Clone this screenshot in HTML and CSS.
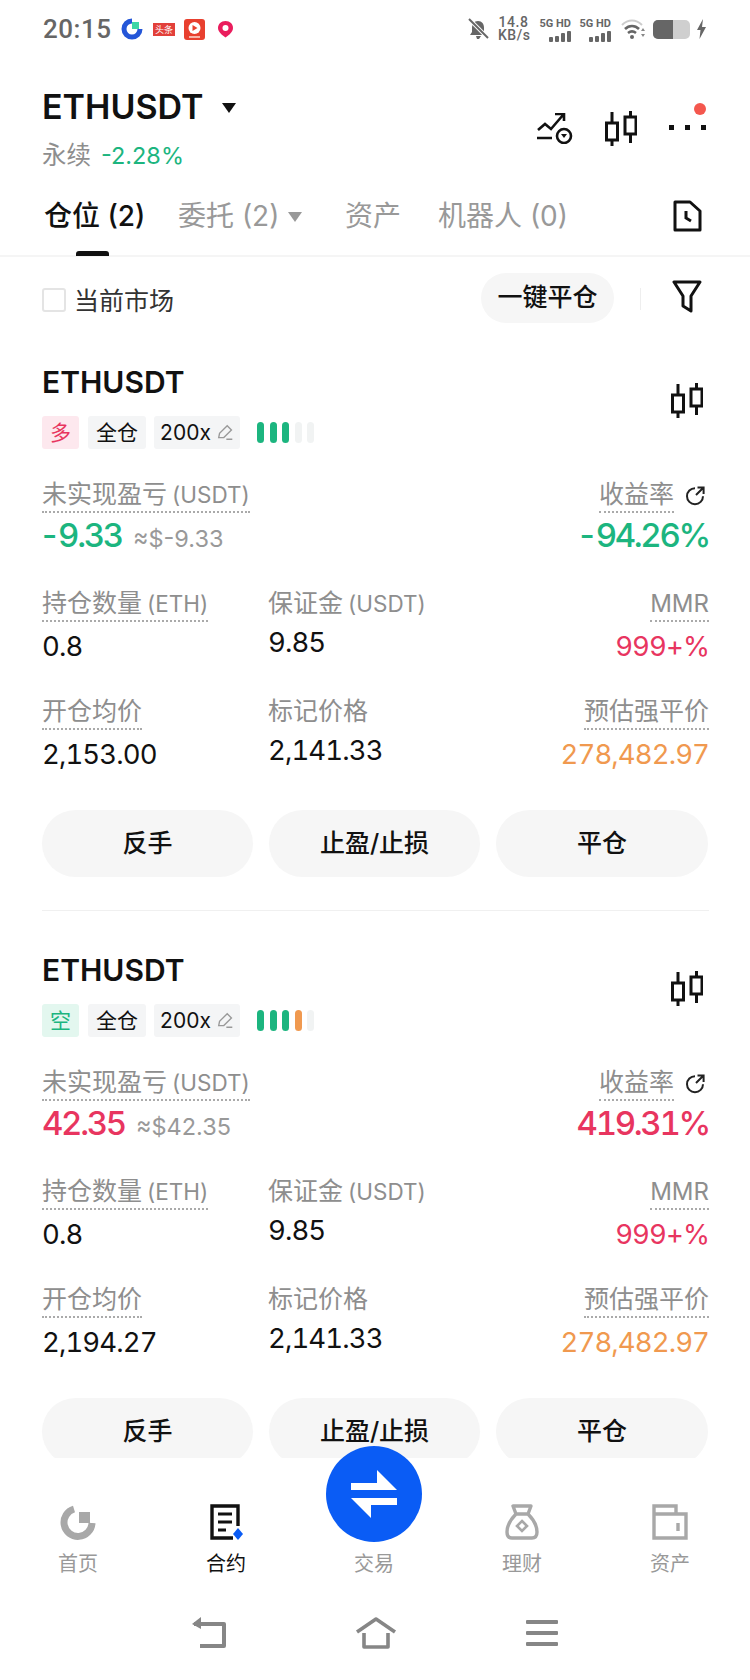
FILE: index.html
```html
<!DOCTYPE html>
<html lang="en">
<head>
    <meta charset="UTF-8">
    <title>ETHUSDT</title>
    <link rel="stylesheet" href="styles.css">
</head>
<body>
    <svg class="defs" width="0" height="0">
        <symbol id="candle" viewBox="0 0 32 35">
            <path d="M7 1v11M7 29v6M25.500 0v6M25.500 23v9" fill="none" stroke="#111" stroke-width="3"/>
            <rect x="1.500" y="12" width="11" height="17" fill="none" stroke="#111" stroke-width="3"/>
            <rect x="20" y="6" width="11" height="17" fill="none" stroke="#111" stroke-width="3"/>
        </symbol>
        <symbol id="pen" viewBox="0 0 20 20">
            <path d="M2 16 3 11 12 2l5 5-9 9zM11 18h7" fill="none" stroke="#999" stroke-width="1.6"/>
        </symbol>
        <symbol id="refresh" viewBox="0 0 20 20">
            <path d="M10 2.200a8 8 0 1 0 8 8" fill="none" stroke="#222" stroke-width="2"/>
            <path d="M11 9l7-7M12.500 1.600H18.600V8" fill="none" stroke="#222" stroke-width="2"/>
        </symbol>
    </svg>

    <div class="phone">
        <div class="status">
            <span class="time">20:15</span>
            <svg class="app-ring" width="22" height="22" viewBox="0 0 22 22">
                <path d="M11 3a8 8 0 1 0 8 8" fill="none" stroke="#2456d8" stroke-width="5"/>
                <rect x="11" y="4" width="7" height="7" fill="#3ed6a6"/>
            </svg>
            <span class="app-news">头条</span>
            <svg class="app-video" width="21" height="21" viewBox="0 0 21 21">
                <rect width="21" height="21" rx="3" fill="#e8402f"/>
                <circle cx="10.500" cy="9" r="6" fill="#fff"/>
                <path d="M8.500 6l5 3-5 3z" fill="#e8402f"/>
                <rect x="5" y="17" width="11" height="2" fill="#f7b3a8"/>
            </svg>
            <svg class="app-pin" width="17" height="18" viewBox="0 0 17 18">
                <path d="M8.500 1C4 1 1 4 1 8c0 4 4 7 7.500 9.500C12 15 16 12 16 8c0-4-3-7-7.500-7z" fill="#ea1d5d"/>
                <circle cx="8.500" cy="8" r="3" fill="#fff"/>
            </svg>
            <div class="status-right">
                <svg width="21" height="22" viewBox="0 0 21 22">
                    <path d="M10 3c4 0 6 3 6 7v4l3 3H2l2-3v-4c0-4 2-7 6-7zM8 18h5l-2 3h-2z" fill="#666"/>
                    <path d="M1 1l19 19" stroke="#fff" stroke-width="4"/>
                    <path d="M1 1l19 19" stroke="#666" stroke-width="2"/>
                </svg>
                <div class="speed"><span>14.8</span><span>KB/s</span></div>
                <div class="signal">
                    <span>5G HD</span>
                    <div class="sig-bars"><i class="s1"></i><i class="s2"></i><i class="s3"></i><i class="s4"></i></div>
                </div>
                <div class="signal">
                    <span>5G HD</span>
                    <div class="sig-bars"><i class="s1"></i><i class="s2"></i><i class="s3"></i><i class="s4"></i></div>
                </div>
                <svg class="wifi" width="25" height="20" viewBox="0 0 25 20">
                    <path d="M1 6c6-6 14-6 20 0" fill="none" stroke="#ccc" stroke-width="2"/>
                    <path d="M4 10c4-4 10-4 14 0M7 14c2.500-2 5.500-2 8 0" fill="none" stroke="#666" stroke-width="2.600"/>
                    <circle cx="11" cy="18" r="2" fill="#666"/>
                    <path d="M22 9l2 3h-4zM22 18l2-3h-4z" fill="#888"/>
                </svg>
                <div class="battery"><div class="battery-fill"></div></div>
                <svg width="9" height="20" viewBox="0 0 9 20"><path d="M6 0 0 11h3.500L2.500 20 9 8H5z" fill="#666"/></svg>
            </div>
        </div>

        <div class="header">
            <div>
                <div class="symbol"><span>ETHUSDT</span><i class="caret"></i></div>
                <div class="symbol-sub">永续 <span class="green">-2.28%</span></div>
            </div>
            <div class="header-icons">
                <svg class="chart-ic" width="36" height="31" viewBox="0 0 36 31">
                    <path d="M1 17l7-6 6 5L26 2M18 1h9v7M0 25h15" fill="none" stroke="#111" stroke-width="2.600"/>
                    <circle cx="27" cy="23" r="7" fill="none" stroke="#111" stroke-width="2.600"/>
                    <path d="M24 21h6l-3 4z" fill="#111"/>
                </svg>
                <svg class="candle-top" width="32" height="35"><use href="#candle"/></svg>
                <div class="more">
                    <i></i><i></i><i></i>
                    <b class="more-dot"></b>
                </div>
            </div>
        </div>

        <div class="tabs">
            <div class="tab active">仓位 (2)</div>
            <div class="tab tab-order">委托 (2)<i class="caret-grey"></i></div>
            <div class="tab tab-asset">资产</div>
            <div class="tab tab-bot">机器人 (0)</div>
            <svg class="tab-doc" width="29" height="32" viewBox="0 0 29 32">
                <path d="M2 2h15l10 9v19H2z" fill="none" stroke="#111" stroke-width="3" stroke-linejoin="round"/>
                <path d="M13 11v7l5 3" fill="none" stroke="#111" stroke-width="3"/>
            </svg>
        </div>

        <div class="main">
            <div class="filter">
                <span class="check"></span>
                <span class="filter-text">当前市场</span>
                <span class="close-all">一键平仓</span>
                <span class="filter-sep"></span>
                <svg width="30" height="33" viewBox="0 0 30 33">
                    <path d="M2 2h26L19 16v15l-8-5V16z" fill="none" stroke="#111" stroke-width="3" stroke-linejoin="round"/>
                </svg>
            </div>

            <div class="card">
                <div class="card-head">
                    <span class="card-title">ETHUSDT</span>
                    <svg width="32" height="35"><use href="#candle"/></svg>
                </div>
                <div class="tags">
                    <span class="tag tag-long">多</span>
                    <span class="tag tag-mode">全仓</span>
                    <span class="tag tag-lev">200x<svg width="17" height="17"><use href="#pen"/></svg></span>
                    <div class="risk">
                        <i class="on"></i><i class="on"></i><i class="on"></i><i></i><i></i>
                    </div>
                </div>
                <div class="pnl">
                    <div>
                        <span class="label dotted">未实现盈亏 <span class="unit">(USDT)</span></span>
                        <div class="pnl-val"><span class="big green neg">-9.33</span><span class="approx">≈$-9.33</span></div>
                    </div>
                    <div class="right">
                        <span class="label-wrap"><span class="label dotted">收益率</span><svg width="20" height="20"><use href="#refresh"/></svg></span>
                        <div class="big green">-94.26%</div>
                    </div>
                </div>
                <div class="metrics">
                    <div class="metric"><span class="label dotted">持仓数量 <span class="unit">(ETH)</span></span><div class="val">0.8</div></div>
                    <div class="metric mid"><span class="label">保证金 <span class="unit">(USDT)</span></span><div class="val">9.85</div></div>
                    <div class="metric right"><span class="label label-en dotted">MMR</span><div class="val red">999+%</div></div>
                    <div class="metric"><span class="label dotted">开仓均价</span><div class="val">2,153.00</div></div>
                    <div class="metric mid"><span class="label">标记价格</span><div class="val">2,141.33</div></div>
                    <div class="metric right"><span class="label dotted">预估强平价</span><div class="val orange">278,482.97</div></div>
                </div>
                <div class="actions">
                    <span class="btn">反手</span>
                    <span class="btn">止盈/止损</span>
                    <span class="btn">平仓</span>
                </div>
            </div>

            <div class="card">
                <div class="card-head">
                    <span class="card-title">ETHUSDT</span>
                    <svg width="32" height="35"><use href="#candle"/></svg>
                </div>
                <div class="tags">
                    <span class="tag tag-short">空</span>
                    <span class="tag tag-mode">全仓</span>
                    <span class="tag tag-lev">200x<svg width="17" height="17"><use href="#pen"/></svg></span>
                    <div class="risk">
                        <i class="on"></i><i class="on"></i><i class="on"></i><i class="warn"></i><i></i>
                    </div>
                </div>
                <div class="pnl">
                    <div>
                        <span class="label dotted">未实现盈亏 <span class="unit">(USDT)</span></span>
                        <div class="pnl-val"><span class="big red">42.35</span><span class="approx">≈$42.35</span></div>
                    </div>
                    <div class="right">
                        <span class="label-wrap"><span class="label dotted">收益率</span><svg width="20" height="20"><use href="#refresh"/></svg></span>
                        <div class="big red">419.31%</div>
                    </div>
                </div>
                <div class="metrics">
                    <div class="metric"><span class="label dotted">持仓数量 <span class="unit">(ETH)</span></span><div class="val">0.8</div></div>
                    <div class="metric mid"><span class="label">保证金 <span class="unit">(USDT)</span></span><div class="val">9.85</div></div>
                    <div class="metric right"><span class="label label-en dotted">MMR</span><div class="val red">999+%</div></div>
                    <div class="metric"><span class="label dotted">开仓均价</span><div class="val">2,194.27</div></div>
                    <div class="metric mid"><span class="label">标记价格</span><div class="val">2,141.33</div></div>
                    <div class="metric right"><span class="label dotted">预估强平价</span><div class="val orange">278,482.97</div></div>
                </div>
                <div class="actions">
                    <span class="btn">反手</span>
                    <span class="btn">止盈/止损</span>
                    <span class="btn">平仓</span>
                </div>
            </div>
        </div>

        <div class="bottom">
            <div class="nav">
                <div class="nav-item">
                    <svg width="36" height="36" viewBox="0 0 36 36">
                        <path d="M14 5a14 14 0 1 0 18 14" fill="none" stroke="#a8a8a8" stroke-width="7"/>
                        <rect x="19" y="8" width="11" height="11" fill="#a8a8a8"/>
                    </svg>
                    <span>首页</span>
                </div>
                <div class="nav-item nav-on">
                    <svg width="36" height="36" viewBox="0 0 36 36">
                        <path d="M30 22V2H4v32h21" fill="none" stroke="#111" stroke-width="3.400"/>
                        <path d="M10 10h14M10 18h14M10 26h8" stroke="#111" stroke-width="3"/>
                        <path d="M30 24l5 6-5 6-5-6z" fill="#0a5cf5"/>
                    </svg>
                    <span>合约</span>
                </div>
                <div class="nav-item">
                    <span class="nav-gap"></span>
                    <span>交易</span>
                </div>
                <div class="nav-item">
                    <svg width="36" height="36" viewBox="0 0 36 36">
                        <path d="M9 2h18l-3 8H12zM12 10C6 16 3 22 3 28c0 4 2 6 5 6h20c3 0 5-2 5-6 0-6-3-12-9-18" fill="none" stroke="#a8a8a8" stroke-width="3.400" stroke-linejoin="round"/>
                        <path d="M18 17l5 5-5 5-5-5z" fill="none" stroke="#a8a8a8" stroke-width="2.600"/>
                    </svg>
                    <span>理财</span>
                </div>
                <div class="nav-item">
                    <svg width="36" height="36" viewBox="0 0 36 36">
                        <path d="M2 10V2h22v8M2 10h32v24H2zM26 19v8" fill="none" stroke="#a8a8a8" stroke-width="3.400"/>
                    </svg>
                    <span>资产</span>
                </div>
            </div>
            <div class="sysnav">
                <svg width="36" height="32" viewBox="0 0 36 32">
                    <path d="M3 7h30v22H9" fill="none" stroke="#868686" stroke-width="4" stroke-linejoin="round"/>
                    <path d="M10 0v12L1 7z" fill="#868686"/>
                </svg>
                <svg width="42" height="32" viewBox="0 0 42 32">
                    <path d="M2 15 21 2l19 13M9 16v14h24V16" fill="none" stroke="#868686" stroke-width="3.600" stroke-linejoin="round"/>
                </svg>
                <div class="sys-menu"><i></i><i></i><i></i></div>
            </div>
        </div>

        <!-- sits over the bottom of the list and the nav -->
        <div class="fab">
            <svg width="46" height="48" viewBox="0 0 46 48">
                <path d="M26 0l20 20H0v-7h26zM20 48L0 28h46v7H20z" fill="#fff"/>
            </svg>
        </div>
    </div>
</body>
</html>
```

FILE: styles.css
```css
*{
    margin: 0;
    padding: 0;
    box-sizing: border-box;
}
body{
    background: #fff;
    font-family: Inter, "Noto Sans CJK SC", sans-serif;
    color: #111;
}
i{
    display: block;
}
.defs{
    position: absolute;
}
.phone{
    position: relative;
    width: 750px;
    height: 1680px;
    overflow: hidden;
    display: flex;
    flex-direction: column;
}
.green{
    color: #1cb57f;
}
.red{
    color: #e8355f;
}
.orange{
    color: #f0994f;
}

/* status bar */
.status{
    height: 58px;
    padding: 0 44px 0 43px;
    display: flex;
    align-items: center;
    color: #666;
}
.time{
    font: 500 26px Roboto, sans-serif;
    letter-spacing: 0.5px;
    width: 78px;
}
.app-ring{
    margin-right: 10px;
}
.app-news{
    width: 22px;
    height: 13px;
    background: #e2403a;
    color: #fff;
    font-size: 9px;
    line-height: 13px;
    text-align: center;
    margin-right: 9px;
}
.app-video{
    margin-right: 12px;
}
.status-right{
    margin-left: auto;
    display: flex;
    align-items: center;
}
.speed{
    display: flex;
    flex-direction: column;
    font: 500 14px/13px Roboto, sans-serif;
    letter-spacing: 0.5px;
    margin: 0 9px 0 9px;
    width: 31px;
    text-align: center;
}
.signal{
    width: 33px;
    margin-right: 7px;
    display: flex;
    flex-direction: column;
    align-items: flex-end;
    font: 700 11px/13px Roboto, sans-serif;
    white-space: nowrap;
}
.sig-bars{
    display: flex;
    align-items: flex-end;
    gap: 2px;
    height: 11px;
    margin-top: 1px;
}
.sig-bars i{
    width: 4px;
    background: #666;
    border-radius: 1px;
}
.s1{
    height: 5px;
}
.s2{
    height: 6px;
}
.s3{
    height: 9px;
}
.s4{
    height: 11px;
}
.wifi{
    margin: 0 7px 0 3px;
}
.battery{
    width: 37px;
    height: 19px;
    background: #cfcfcf;
    border-radius: 5px;
    overflow: hidden;
    margin-right: 7px;
}
.battery-fill{
    width: 20px;
    height: 19px;
    background: #666;
}

/* header */
.header{
    height: 117px;
    padding: 0 44px 0 42px;
    display: flex;
    justify-content: space-between;
    position: relative;
}
.symbol{
    margin-top: 29px;
    display: flex;
    align-items: center;
    font-size: 34px;
    font-weight: 600;
    line-height: 40px;
}
.caret{
    width: 0;
    height: 0;
    margin: 2px 0 0 19px;
    border-left: 7px solid transparent;
    border-right: 7px solid transparent;
    border-top: 10px solid #111;
}
.symbol-sub{
    margin-top: 12px;
    font-size: 24.500px;
    line-height: 32px;
    color: #8e8e8e;
}
.symbol-sub .green{
    margin-left: 3px;
    font-size: 23.500px;
}
.header-icons{
    margin-top: 53px;
    display: flex;
    align-items: flex-start;
}
.chart-ic{
    margin-top: 2px;
}
.candle-top{
    margin: 0 32px;
}
.more{
    position: relative;
    width: 37px;
    height: 32px;
    display: flex;
    justify-content: space-between;
    padding-top: 14px;
}
.more i{
    width: 5px;
    height: 5px;
    background: #111;
}
.more-dot{
    position: absolute;
    right: 0;
    top: -8px;
    width: 12px;
    height: 12px;
    border-radius: 50%;
    background: #f4574e;
}

/* tabs */
.tabs{
    height: 82px;
    border-bottom: 2px solid #f5f5f5;
    padding: 0 48px 0 44px;
    display: flex;
    align-items: flex-start;
    position: relative;
}
.tab{
    position: relative;
    font-size: 28px;
    line-height: 42px;
    height: 81px;
    padding-top: 20px;
    color: #999;
    display: flex;
    align-items: flex-start;
    white-space: pre;
}
.tab.active{
    color: #111;
    font-weight: 500;
    width: 134px;
}
.tab.active::after{
    content: "";
    position: absolute;
    left: 32px;
    bottom: 0;
    width: 33px;
    height: 5px;
    border-radius: 3px 3px 0 0;
    background: #111;
}
.tab-order{
    width: 167px;
}
.caret-grey{
    width: 0;
    height: 0;
    margin: 17px 0 0 9px;
    border-left: 7px solid transparent;
    border-right: 7px solid transparent;
    border-top: 10px solid #999;
}
.tab-asset{
    width: 93px;
}
.tab-doc{
    margin: 25px 0 0 auto;
}

/* list */
.main{
    height: 1201px;
    overflow: hidden;
    padding: 0 41px 0 42px;
}
.filter{
    height: 84px;
    display: flex;
    align-items: center;
}
.check{
    width: 24px;
    height: 24px;
    margin-top: 1px;
    border: 2px solid #e4e4e4;
    border-radius: 3px;
}
.filter-text{
    margin-left: 8px;
    font-size: 25px;
    color: #333;
}
.close-all{
    margin-left: auto;
    width: 133px;
    height: 50px;
    margin-top: -2px;
    border-radius: 25px;
    background: #f6f6f6;
    font-size: 25px;
    font-weight: 500;
    line-height: 48px;
    text-align: center;
}
.filter-sep{
    width: 1px;
    height: 22px;
    background: #eee;
    margin: 0 31px 0 26px;
}
.filter svg{
    margin: -6px 7px 0 0;
}
.card{
    height: 570px;
    border-bottom: 1px solid #f0f0f0;
}
.card + .card{
    margin-top: 18px;
    border-bottom: 0;
}
.card-head{
    height: 74px;
    padding: 19px 6px 0 0;
    display: flex;
    justify-content: space-between;
    align-items: flex-start;
}
.card-title{
    font-size: 30px;
    font-weight: 600;
    line-height: 44px;
}
.card-head svg{
    margin-top: 23px;
}
.tags{
    display: flex;
    align-items: center;
    height: 34px;
}
.tag{
    height: 33px;
    border-radius: 3px;
    font-size: 21px;
    line-height: 33px;
    text-align: center;
    background: #f4f5f6;
}
.tag-long{
    width: 37px;
    background: #fde8ee;
    color: #e8355f;
}
.tag-short{
    width: 37px;
    background: #e3f7ef;
    color: #1cb57f;
}
.tag-mode{
    width: 58px;
    margin: 0 8px 0 9px;
}
.tag-lev{
    width: 86px;
    display: flex;
    align-items: center;
    justify-content: center;
    gap: 6px;
}
.risk{
    display: flex;
    gap: 5.500px;
    margin-left: 17px;
}
.risk i{
    width: 7px;
    height: 21px;
    border-radius: 4px;
    background: #f1f3f3;
}
.risk .on{
    background: #1cb57f;
}
.risk .warn{
    background: #f0994f;
}
.label{
    display: inline-block;
    font-size: 25px;
    line-height: 31px;
    color: #8e8e8e;
    white-space: nowrap;
}
.label-en{
    font-size: 24px;
}
.unit{
    margin-left: -2px;
    font-size: 22.500px;
}
.dotted{
    padding-bottom: 1px;
    border-bottom: 2px dotted #aaa;
}
.label-wrap{
    display: inline-flex;
    align-items: center;
    gap: 11px;
    margin-right: 4px;
}
.pnl{
    margin-top: 30px;
    height: 109px;
    display: flex;
    justify-content: space-between;
}
.right{
    text-align: right;
}
.pnl-val{
    display: flex;
    align-items: baseline;
}
.big{
    margin-top: 1px;
    font-size: 33px;
    font-weight: 500;
    font-feature-settings: "tnum";
    line-height: 42px;
    letter-spacing: -2.300px;
}
.neg{
    margin-left: -3px;
}
.approx{
    margin-left: 11px;
    font-size: 23.500px;
    color: #999;
}
.metrics{
    display: grid;
    grid-template-columns: 226px 1fr 1fr;
    grid-auto-rows: 108px;
}
.metric{
    height: 108px;
}
.val{
    margin-top: 2px;
    font-size: 27.500px;
    font-feature-settings: "tnum";
    letter-spacing: -0.9px;
    line-height: 44px;
}
.mid .val{
    margin-top: 4px;
    line-height: 38px;
}
.actions{
    margin-top: 6px;
    display: grid;
    grid-template-columns: 211px 211px 212px;
    gap: 16px;
}
.btn{
    height: 67px;
    border-radius: 34px;
    background: #f6f6f6;
    font-size: 25px;
    font-weight: 500;
    line-height: 66px;
    text-align: center;
}

/* bottom */
.bottom{
    flex: 1;
    background: #fff;
}
.nav{
    display: flex;
    padding: 46px 0 0 4px;
}
.nav-item{
    width: 148px;
    display: flex;
    flex-direction: column;
    align-items: center;
    font-size: 20px;
    line-height: 28px;
    color: #999;
}
.nav-item svg, .nav-gap{
    height: 36px;
    margin-bottom: 10px;
}
.nav-on{
    color: #111;
}
.sysnav{
    margin-top: 39px;
    padding-left: 191px;
    display: flex;
    align-items: center;
}
.sysnav svg:nth-child(2){
    margin: 0 129px 0 128px;
}
.sys-menu{
    width: 32px;
    display: flex;
    flex-direction: column;
    gap: 7px;
}
.sys-menu i{
    height: 4px;
    background: #868686;
    border-radius: 1px;
}
.fab{
    position: absolute;
    left: 326px;
    top: 1446px;
    width: 96px;
    height: 96px;
    border-radius: 50%;
    background: #0a5cf5;
    display: flex;
    align-items: center;
    justify-content: center;
}
```
